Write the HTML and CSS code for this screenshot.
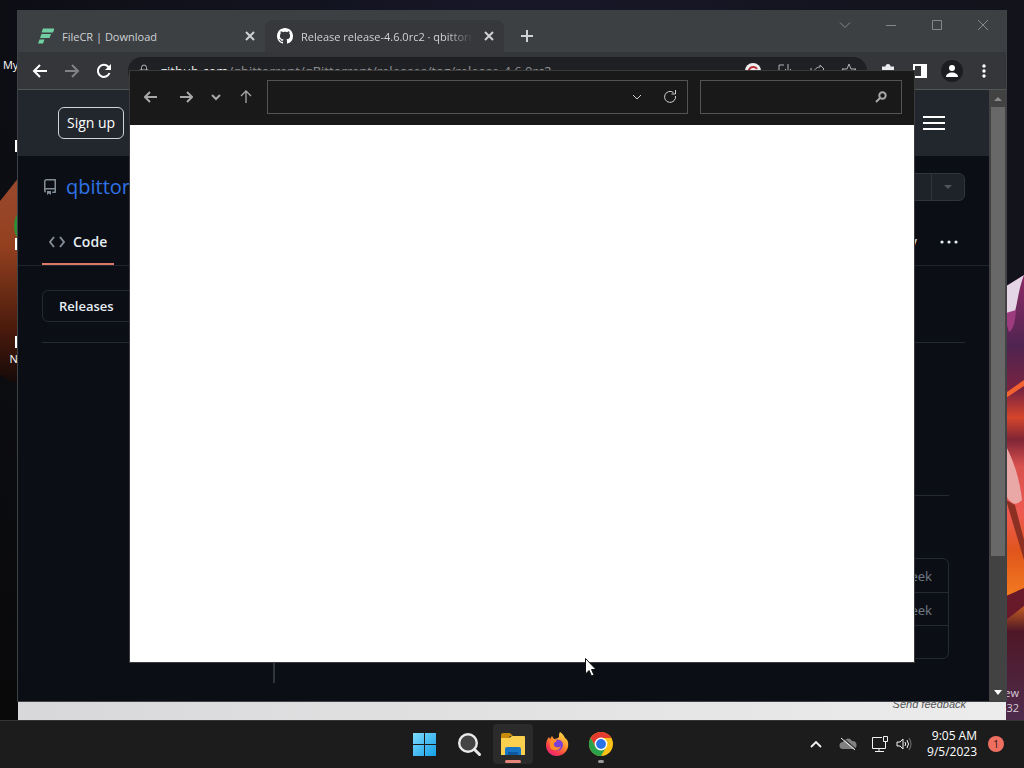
FILE: index.html
```html
<!DOCTYPE html>
<html lang="en">
<head>
    <meta charset="UTF-8">
    <meta name="viewport" content="width=device-width, initial-scale=1.0">
    <title>Desktop</title>
    <link rel="stylesheet" href="styles.css">
</head>
<body>
    <main class="desktop">
        <svg class="wallpaper" viewBox="0 0 1024 720" preserveAspectRatio="none" aria-hidden="true">
            <defs>
                <linearGradient id="sky" x1="0" y1="0" x2="1" y2="0">
                    <stop offset="0" stop-color="#0d0e14"/>
                    <stop offset="0.5" stop-color="#171728"/>
                    <stop offset="1" stop-color="#13131c"/>
                </linearGradient>
                <linearGradient id="shade" x1="0" y1="0" x2="0" y2="1">
                    <stop offset="0" stop-color="#0a0b0d" stop-opacity="0"/>
                    <stop offset="1" stop-color="#09090a"/>
                </linearGradient>
                <linearGradient id="ember" x1="0" y1="0" x2="0" y2="1">
                    <stop offset="0" stop-color="#9a4a30"/>
                    <stop offset="0.35" stop-color="#93401f"/>
                    <stop offset="0.75" stop-color="#4a1a0c"/>
                    <stop offset="1" stop-color="#160a08"/>
                </linearGradient>
                <linearGradient id="petal" x1="0" y1="0" x2="0" y2="1">
                    <stop offset="0" stop-color="#8c2c66"/>
                    <stop offset="0.16" stop-color="#4f2450"/>
                    <stop offset="0.26" stop-color="#7a2340"/>
                    <stop offset="0.32" stop-color="#d5452c"/>
                    <stop offset="0.37" stop-color="#7f2535"/>
                    <stop offset="0.43" stop-color="#d9504e"/>
                    <stop offset="0.54" stop-color="#ee5a50"/>
                    <stop offset="0.62" stop-color="#e0551c"/>
                    <stop offset="0.72" stop-color="#f27a20"/>
                    <stop offset="0.8" stop-color="#4f1726"/>
                    <stop offset="1" stop-color="#4d2b4c"/>
                </linearGradient>
            </defs>
            <rect width="1024" height="720" fill="url(#sky)"/>
            <rect y="60" width="400" height="660" fill="url(#shade)"/>
            <path d="M24 172C14 182 8 192 0 201V374C8 382 16 384 24 380Z" fill="url(#ember)"/>
            <path d="M1000 290L1024 275V720H1000Z" fill="url(#petal)"/>
            <path d="M1000 290L1024 275C1018 290 1017 308 1014 314L1000 318Z" fill="#e4d5e6"/>
            <path d="M1006 313L1016 310C1015 323 1013 330 1009 332L1006 322Z" fill="#9c3c7e"/>
            <path d="M1000 397L1024 380V386L1000 402Z" fill="#f2622e"/>
            <path d="M1006 446C1014 462 1020 480 1022 500C1016 506 1012 505 1006 496Z" fill="#e9a7a5"/>
            <path d="M1006 500L1024 560V540L1015 505Z" fill="#8c3023"/>
            <path d="M1006 596L1024 588V606L1006 620Z" fill="#681a2b"/>
        </svg>

        <ul class="shortcuts">
            <li>
                <svg width="48" height="48" viewBox="0 0 48 48"></svg>
                <span>My Computer</span>
            </li>
            <li>
                <svg width="48" height="48" viewBox="0 0 48 48"><circle cx="24" cy="22" r="21" fill="#d33a32"/><path d="M1 34h12v12H1z" fill="#fff"/></svg>
                <span>Opera</span>
            </li>
            <li>
                <svg width="48" height="48" viewBox="0 0 48 48"><circle cx="24" cy="22" r="24" fill="#2f8f35"/><path d="M1 34h12v12H1z" fill="#fff"/></svg>
                <span>IDM</span>
            </li>
            <li>
                <svg width="48" height="48" viewBox="0 0 48 48"><circle cx="24" cy="22" r="18" fill="#63c14b"/><path d="M1 34h12v12H1z" fill="#fff"/></svg>
                <span>Notepad++</span>
            </li>
        </ul>

        <p class="watermark">Preview<br>22632</p>

        <section class="back-window">
            <a href="#" class="feedback">Send feedback</a>
        </section>

        <section class="browser" aria-label="Browser">
            <div class="tab-strip">
                <div class="tab">
                    <svg width="16" height="16" viewBox="0 0 16 16" fill="#70d0a4"><path d="M5 0.500h11.500l-1.500 4H3.500z"/><path d="M3.500 6h9.500l-1.500 4H2z"/><path d="M1.500 11.500h5l-1.500 4H0z"/></svg>
                    <span class="tab-title">FileCR | Download</span>
                    <button class="tab-close" aria-label="Close tab"><svg width="10" height="10" viewBox="0 0 10 10"><path d="M1 1l8 8M9 1L1 9"/></svg></button>
                </div>
                <div class="tab active">
                    <svg width="16" height="16" viewBox="0 0 16 16" fill="#fff"><path d="M8 0C3.580 0 0 3.580 0 8c0 3.540 2.290 6.530 5.470 7.590.4.070.55-.17.55-.38 0-.19-.01-.82-.01-1.490-2.010.37-2.530-.49-2.690-.94-.09-.23-.48-.94-.82-1.130-.28-.15-.68-.52-.01-.53.63-.01 1.080.58 1.230.82.72 1.210 1.870.87 2.330.66.07-.52.28-.87.51-1.070-1.780-.2-3.640-.89-3.640-3.950 0-.87.31-1.590.82-2.150-.08-.2-.36-1.020.08-2.120 0 0 .67-.21 2.200.82.64-.18 1.320-.27 2-.27s1.360.09 2 .27c1.530-1.040 2.200-.82 2.200-.82.44 1.100.16 1.920.08 2.120.51.56.82 1.270.82 2.150 0 3.070-1.870 3.750-3.650 3.950.29.25.54.73.54 1.480 0 1.070-.01 1.930-.01 2.200 0 .21.15.46.55.38A8.010 8.010 0 0 0 16 8c0-4.420-3.580-8-8-8z"/></svg>
                    <span class="tab-title faded">Release release-4.6.0rc2 · qbittorr</span>
                    <button class="tab-close" aria-label="Close tab"><svg width="10" height="10" viewBox="0 0 10 10"><path d="M1 1l8 8M9 1L1 9"/></svg></button>
                </div>
                <button class="new-tab" aria-label="New tab"><svg width="12" height="12" viewBox="0 0 12 12"><path d="M6 0v12M0 6h12"/></svg></button>
                <div class="window-controls">
                    <button aria-label="Search tabs"><svg width="12" height="12" viewBox="0 0 12 12"><path d="M1 3.500l5 5 5-5"/></svg></button>
                    <button aria-label="Minimize"><svg width="12" height="12" viewBox="0 0 12 12"><path d="M1 6.500h10"/></svg></button>
                    <button aria-label="Maximize"><svg width="12" height="12" viewBox="0 0 12 12"><path d="M1.500 1.500h9v9h-9z"/></svg></button>
                    <button aria-label="Close"><svg width="12" height="12" viewBox="0 0 12 12"><path d="M1 1l10 10M11 1L1 11"/></svg></button>
                </div>
            </div>

            <div class="toolbar">
                <button aria-label="Back"><svg width="16" height="16" viewBox="0 0 16 16"><path d="M15 8H2M8 2L2 8l6 6"/></svg></button>
                <button class="dim" aria-label="Forward"><svg width="16" height="16" viewBox="0 0 16 16"><path d="M1 8h13M8 2l6 6-6 6"/></svg></button>
                <button aria-label="Reload"><svg width="16" height="16" viewBox="0 0 16 16"><path d="M13.500 10A6 6 0 1 1 12.300 3.800L14 5.500"/><path d="M15 1v6H9z" fill="#fff" stroke="none"/></svg></button>
                <div class="omnibox">
                    <svg width="12" height="14" viewBox="0 0 12 14"><path d="M1.500 6h9v7h-9zM3.500 6V3.500a2.500 2.500 0 0 1 5 0V6"/></svg>
                    <a href="#" class="url"><b>github.com</b>/qbittorrent/qBittorrent/releases/tag/release-4.6.0rc2</a>
                    <div class="omni-actions">
                        <button aria-label="Google"><svg width="16" height="16" viewBox="0 0 16 16"><circle cx="8" cy="8" r="8" fill="#eee" stroke="none"/><path d="M12 6A4.500 4.500 0 1 0 12 11H8" stroke="#b8323c" stroke-width="2"/></svg></button>
                        <button aria-label="Install"><svg width="16" height="16" viewBox="0 0 16 16"><path d="M7 2H2v10h12V9M11 1v8M8 6l3 3 3-3"/></svg></button>
                        <button aria-label="Share"><svg width="16" height="16" viewBox="0 0 16 16"><path d="M2 5v9h11v-3M5 10c0-4 3-6 6-6V2l4 4-4 4V7"/></svg></button>
                        <button aria-label="Bookmark"><svg width="16" height="16" viewBox="0 0 16 16"><path d="M8 1l2 5h5l-4 3 2 6-5-4-5 4 2-6-4-3h5z"/></svg></button>
                    </div>
                </div>
                <button aria-label="Extensions"><svg width="16" height="16" viewBox="0 0 16 16"><path d="M2 3.500h3.500a2.500 2.500 0 0 1 5 0H14V8a2 2 0 0 1 0 4v3H2z" fill="#e8eaed" stroke="none"/></svg></button>
                <button aria-label="Side panel"><svg width="16" height="16" viewBox="0 0 16 16"><path d="M2 2h12v12H2z"/><path d="M9 2h5v12H9z" fill="#fff" stroke="none"/></svg></button>
                <button aria-label="Profile"><svg width="24" height="24" viewBox="0 0 24 24"><circle cx="12" cy="12" r="11" fill="#1c1d20" stroke="none"/><circle cx="12" cy="9" r="3" fill="#fff" stroke="none"/><path d="M6 18c0-6 12-6 12 0z" fill="#fff" stroke="none"/></svg></button>
                <button aria-label="Menu"><svg width="4" height="14" viewBox="0 0 4 14" class="solid"><circle cx="2" cy="2" r="1.700"/><circle cx="2" cy="7" r="1.700"/><circle cx="2" cy="12" r="1.700"/></svg></button>
            </div>

            <div class="viewport">
                <div class="page">
                    <header class="site-header">
                        <a href="#" class="sign-up">Sign up</a>
                        <button class="hamburger" aria-label="Menu"><span></span><span></span><span></span></button>
                    </header>

                    <div class="repo-head">
                        <svg width="16" height="16" viewBox="0 0 16 16" fill="#848d97"><path d="M2 2.500A2.500 2.500 0 0 1 4.500 0h8.750a.75.75 0 0 1 .75.75v12.500a.75.75 0 0 1-.75.75h-2.500a.75.75 0 0 1 0-1.500h1.750v-2h-8a1 1 0 0 0-.714 1.700.75.75 0 1 1-1.072 1.050A2.495 2.495 0 0 1 2 11.500Zm10.500-1h-8a1 1 0 0 0-1 1v6.708A2.486 2.486 0 0 1 4.500 9h8ZM5 12.250a.25.25 0 0 1 .25-.25h3.500a.25.25 0 0 1 .25.25v3.250a.25.25 0 0 1-.4.200l-1.450-1.087a.249.249 0 0 0-.3 0L5.400 15.700a.25.25 0 0 1-.4-.2Z"/></svg>
                        <a href="#" class="owner">qbittorrent</a>
                        <div class="star-group">
                            <button>Star</button>
                            <button class="caret" aria-label="Lists"><svg width="8" height="4" viewBox="0 0 8 4"><path d="M0 0h8L4 4z"/></svg></button>
                        </div>
                    </div>

                    <nav class="repo-nav">
                        <a href="#" class="selected">
                            <svg width="16" height="16" viewBox="0 0 16 16"><path d="M5 3L1 8l4 5M11 3l4 5-4 5"/></svg>
                            Code
                        </a>
                        <a href="#" class="security">Security</a>
                        <button class="more" aria-label="More"><svg width="18" height="4" viewBox="0 0 18 4"><circle cx="2" cy="2" r="1.600"/><circle cx="9" cy="2" r="1.600"/><circle cx="16" cy="2" r="1.600"/></svg></button>
                    </nav>

                    <div class="content">
                        <div class="subnav">
                            <a href="#">Releases</a>
                            <a href="#">Tags</a>
                        </div>
                        <article class="release">
                            <div class="notes"></div>
                            <ul class="assets">
                                <li>last week</li>
                                <li>last week</li>
                                <li></li>
                            </ul>
                        </article>
                    </div>
                </div>
                <div class="scrollbar">
                    <svg width="8" height="4" viewBox="0 0 8 4" fill="#8b8b8b"><path d="M0 4h8L4 0z"/></svg>
                    <div class="thumb"></div>
                    <svg width="8" height="5" viewBox="0 0 8 5" fill="#fff"><path d="M0 0h8L4 5z"/></svg>
                </div>
            </div>
        </section>

        <section class="explorer" aria-label="File Explorer">
            <div class="explorer-bar">
                <button class="wide" aria-label="Back"><svg width="14" height="14" viewBox="0 0 14 14"><path d="M13 7H1M6 2L1 7l5 5"/></svg></button>
                <button class="wide" aria-label="Forward"><svg width="14" height="14" viewBox="0 0 14 14"><path d="M1 7h12M8 2l5 5-5 5"/></svg></button>
                <button class="narrow" aria-label="Recent"><svg width="10" height="10" viewBox="0 0 10 10"><path d="M1 3l4 4 4-4"/></svg></button>
                <button aria-label="Up"><svg width="14" height="14" viewBox="0 0 14 14"><path d="M7 13V1M2 6l5-5 5 5" stroke-width="1.300"/></svg></button>
                <div class="field address">
                    <input type="text" aria-label="Address">
                    <button aria-label="Previous locations"><svg class="thin" width="10" height="10" viewBox="0 0 10 10"><path d="M1 3l4 4 4-4"/></svg></button>
                    <button aria-label="Refresh"><svg class="thin" width="14" height="14" viewBox="0 0 14 14"><path d="M12.500 6A5.500 5.500 0 1 1 10.500 2.600M8.500 4h4V0"/></svg></button>
                </div>
                <div class="field search">
                    <input type="search" aria-label="Search">
                    <button aria-label="Search"><svg width="12" height="12" viewBox="0 0 12 12"><circle cx="7.500" cy="4.500" r="3.200"/><path d="M5 7l-4 4"/></svg></button>
                </div>
            </div>
        </section>

        <svg class="cursor" width="12" height="19" viewBox="0 0 12 19" aria-hidden="true"><path d="M0.500 0.500V16L4 12.500l2.500 5.500 2.500-1-2.500-5.500H11z" fill="#fff" stroke="#111"/></svg>
    </main>

    <footer class="taskbar">
        <div class="apps">
            <button aria-label="Start">
                <svg width="24" height="24" viewBox="0 0 24 24">
                    <defs><linearGradient id="win" x1="0" y1="0" x2="1" y2="1"><stop offset="0" stop-color="#7fdcfb"/><stop offset="1" stop-color="#149fe8"/></linearGradient></defs>
                    <path d="M0 1h11v11H0zM12 1h11v11H12zM0 13h11v11H0zM12 13h11v11H12z" fill="url(#win)"/>
                </svg>
            </button>
            <button aria-label="Search">
                <svg width="24" height="24" viewBox="0 0 24 24" fill="none" stroke="#e9e9e9"><circle cx="11" cy="11" r="8.800" fill="#444" stroke-width="2.400"/><path d="M17.500 17.500l5 5" stroke-width="3" stroke-linecap="round"/></svg>
            </button>
            <button class="active" aria-label="File Explorer">
                <svg width="26" height="24" viewBox="0 0 26 24"><path d="M1 3q0-2 2-2h7l3 3h-3L8 7H1z" fill="#c98a0c"/><path d="M1 6h8l3-2h12q1 0 1 1v18H1z" fill="#fbd04f"/><path d="M5 23v-6q0-2 2-2h12q2 0 2 2v6z" fill="#1875c4"/><path d="M8 20h10v3H8z" fill="#0d5aa3"/></svg>
            </button>
            <button aria-label="Firefox">
                <svg width="24" height="24" viewBox="0 0 24 24">
                    <defs><linearGradient id="fox" x1="0.800" y1="0" x2="0.200" y2="1"><stop offset="0" stop-color="#ffe14a"/><stop offset="0.450" stop-color="#ff8a2b"/><stop offset="0.750" stop-color="#fb3d4c"/><stop offset="1" stop-color="#e5217e"/></linearGradient></defs>
                    <path d="M15 0c3 2 4 4 5 6 2 1 4 4 3 9-1 5-6 9-11 9C5 24 1 19 1 13c0-3 1-6 3-8l1 2c1-1 1-2 2-3l2 3c2 0 4-1 5-2 0-2 0-4 1-5z" fill="url(#fox)"/>
                    <circle cx="12.500" cy="13" r="5.500" fill="#7a3fd6"/>
                    <path d="M5 9c2-2 5-2 7 0l-3 2c-1 4 4 6 7 3-1 5-9 6-11 1z" fill="#ff8f24"/>
                </svg>
            </button>
            <button class="running" aria-label="Chrome">
                <svg width="24" height="24" viewBox="0 0 24 24">
                    <circle cx="12" cy="12" r="12" fill="#fbc116"/>
                    <path d="M12 6h10.400A12 12 0 0 0 1.600 6L6.800 15z" fill="#e33b2e"/>
                    <path d="M1.600 6A12 12 0 0 0 12 24l5.200-9L12 12 6.800 15z" fill="#2aa14b"/>
                    <circle cx="12" cy="12" r="6.400" fill="#fff"/><circle cx="12" cy="12" r="4.900" fill="#2a72e8"/>
                </svg>
            </button>
        </div>
        <div class="tray">
            <button aria-label="Hidden icons"><svg width="12" height="8" viewBox="0 0 12 8"><path d="M1 7l5-5 5 5" stroke-width="1.800"/></svg></button>
            <button aria-label="OneDrive"><svg width="18" height="16" viewBox="0 0 18 16"><path d="M4 13a3.500 3.500 0 0 1 0-7 5 5 0 0 1 9-1 4 4 0 0 1 1 8z" fill="#808080" stroke="none"/><path d="M3 1l14 12" stroke="#1c1c1c"/><path d="M2 2l14 12"/></svg></button>
            <div class="quick">
                <button aria-label="Network"><svg width="18" height="18" viewBox="0 0 18 18"><path d="M11 2.500H1.500v11h13V9M8 14v2M4 16.500h9M12.500 1.500h4v5h-4zM14.500 7v6"/></svg></button>
                <button aria-label="Volume"><svg width="16" height="16" viewBox="0 0 16 16"><path d="M1 6v4h3l3 3V3L4 6zM9 6q1.500 2 0 4M11 4q3 4 0 8"/><path d="M13 2q4 6 0 12" stroke="#777"/></svg></button>
            </div>
            <time class="clock" datetime="2023-09-05T09:05">9:05 AM<br>9/5/2023</time>
            <button class="badge" aria-label="1 notification">1</button>
        </div>
    </footer>
</body>
</html>
```
FILE: styles.css
```css
* {
    box-sizing: border-box;
}

body {
    margin: 0;
    height: 100vh;
    display: flex;
    flex-direction: column;
    overflow: hidden;
    font-family: "Open Sans", "Noto Sans", sans-serif;
    font-size: 11px;
    color: #fff;
    background: #1c1c1c;
}

button {
    display: flex;
    align-items: center;
    justify-content: center;
    padding: 0;
    border: none;
    background: none;
    color: inherit;
    font: inherit;
}

a {
    color: inherit;
    text-decoration: none;
}

svg {
    flex: none;
}

/* Desktop */
.desktop {
    flex: 1;
    position: relative;
    overflow: hidden;
}

.wallpaper {
    position: absolute;
    width: 100%;
    height: 100%;
}

.shortcuts {
    position: absolute;
    left: 0;
    top: 0;
    margin: 0;
    padding: 8px 0;
    list-style: none;
    display: flex;
    flex-direction: column;
    gap: 32px;
    width: 76px;
}

.shortcuts li {
    display: flex;
    flex-direction: column;
    align-items: center;
    line-height: 18px;
    white-space: nowrap;
}

.watermark {
    position: absolute;
    right: 5px;
    bottom: 5px;
    margin: 0;
    text-align: right;
    line-height: 15px;
    color: #d8ccd8;
}

.back-window {
    position: absolute;
    left: 18px;
    right: 18px;
    bottom: 0;
    height: 60px;
    display: flex;
    align-items: flex-end;
    justify-content: flex-end;
    padding: 8px 40px;
    background: linear-gradient(90deg, #d8d8da, #ececec);
}

.feedback {
    font-family: "Liberation Sans", sans-serif;
    font-size: 11px;
    font-style: italic;
    line-height: 16px;
    color: #555;
}

/* Browser */
.browser {
    position: absolute;
    left: 17px;
    right: 17px;
    top: 10px;
    bottom: 18px;
    display: flex;
    flex-direction: column;
    border: 1px solid #3f4346;
    border-top: none;
    background: #0b0f15;
}

.tab-strip {
    display: flex;
    align-items: flex-end;
    height: 42px;
    padding-left: 8px;
    background: #3c4043;
}

.tab {
    flex: 0 1 239px;
    min-width: 0;
    display: flex;
    align-items: center;
    gap: 8px;
    height: 32px;
    padding: 0 7px 0 12px;
    border-radius: 8px 8px 0 0;
    color: #cfd1d4;
}

.tab.active {
    background: #37383c;
}

.tab-title {
    flex: 1;
    overflow: hidden;
    white-space: nowrap;
}

.faded {
    -webkit-mask-image: linear-gradient(90deg, #000 85%, transparent);
    mask-image: linear-gradient(90deg, #000 85%, transparent);
}

.tab-close {
    width: 16px;
    height: 16px;
}

.tab-close svg,
.new-tab svg {
    fill: none;
    stroke: #cfd1d4;
    stroke-width: 2;
}

.new-tab {
    width: 28px;
    height: 32px;
    margin-left: 9px;
}

.window-controls {
    display: flex;
    align-self: flex-start;
    margin-left: auto;
}

.window-controls button {
    width: 46px;
    height: 30px;
}

.window-controls svg {
    fill: none;
    stroke: #85888b;
}

.toolbar {
    display: flex;
    align-items: center;
    height: 38px;
    padding: 0 6px;
    background: #35363a;
    border-bottom: 1px solid #505756;
}

.toolbar button {
    width: 32px;
    height: 32px;
}

.toolbar svg {
    fill: none;
    stroke: #fff;
    stroke-width: 2;
}

.toolbar .dim svg {
    stroke: #808286;
}

.toolbar .solid {
    fill: #fff;
    stroke: none;
}

.omnibox {
    flex: 1;
    min-width: 0;
    display: flex;
    align-items: center;
    gap: 10px;
    height: 28px;
    margin: 0 5px 0 8px;
    padding: 0 2px 0 10px;
    border-radius: 14px;
    background: #1f2023;
    color: #8f9195;
}

.omnibox svg {
    stroke: #b0b2b5;
    stroke-width: 1;
}

.url {
    flex: 1;
    overflow: hidden;
    white-space: nowrap;
    font-size: 13px;
}

.url b {
    font-weight: normal;
    color: #e8eaed;
}

.omni-actions {
    display: flex;
}

.viewport {
    flex: 1;
    min-height: 0;
    display: flex;
}

.page {
    flex: 1;
    min-width: 0;
    overflow: hidden;
    font-family: "Noto Sans", sans-serif;
    font-size: 14px;
    color: #e6edf3;
}

.site-header {
    display: flex;
    align-items: center;
    justify-content: space-between;
    height: 66px;
    padding: 0 44px 0 40px;
    background: #22272e;
}

.sign-up {
    padding: 5px 8px;
    border: 1px solid #d0d4d8;
    border-radius: 6px;
    font-family: "Open Sans", sans-serif;
    line-height: 20px;
    color: #fff;
}

.hamburger {
    flex-direction: column;
    gap: 4px;
    width: 22px;
}

.hamburger span {
    width: 100%;
    height: 2px;
    background: #fff;
}

.repo-head {
    display: flex;
    align-items: center;
    gap: 8px;
    padding: 16px 24px;
    line-height: 30px;
}

.owner {
    font-family: "Open Sans", sans-serif;
    font-size: 20px;
    color: #2f72e6;
}

.star-group {
    display: flex;
    height: 28px;
    margin-left: auto;
    border: 1px solid #30353c;
    border-radius: 6px;
    background: #1e2229;
    color: #3d444d;
}

.star-group button {
    padding: 0 16px;
}

.star-group .caret {
    padding: 0 12px;
    border-left: 1px solid #30353c;
}

.caret svg {
    fill: #50565e;
}

.repo-nav {
    display: flex;
    align-items: stretch;
    height: 48px;
    padding: 0 24px;
    border-bottom: 1px solid #21262d;
}

.repo-nav a {
    display: flex;
    align-items: center;
    gap: 8px;
}

.repo-nav .selected {
    padding: 0 7px;
    border-top: 2px solid transparent;
    border-bottom: 2px solid #e0786a;
    font-family: "Open Sans", sans-serif;
    font-weight: 600;
}

.selected svg {
    fill: none;
    stroke: #848d97;
    stroke-width: 2;
}

.repo-nav .security {
    margin-left: auto;
}

.more {
    width: 64px;
    margin-right: -16px;
}

.more svg {
    fill: #e6edf3;
}

.content {
    padding: 24px 24px 0;
}

.subnav {
    display: flex;
    padding-bottom: 20px;
    border-bottom: 1px solid #242a31;
    font-family: "Open Sans", sans-serif;
    font-size: 13px;
    font-weight: 600;
}

.subnav a {
    padding: 5px 16px;
    border: 1px solid #242a31;
    line-height: 20px;
}

.subnav a:first-child {
    border-radius: 6px 0 0 6px;
}

.release {
    margin: 24px 0 0 231px;
    padding: 0 16px 24px;
    border-left: 2px solid #30353c;
}

.notes {
    height: 129px;
    border-bottom: 1px solid #242a31;
}

.assets {
    margin: 62px 0 0;
    padding: 0;
    list-style: none;
    border: 1px solid #242a31;
    border-radius: 6px;
    font-size: 13px;
    color: #6e7681;
}

.assets li {
    height: 33px;
    padding: 0 16px;
    line-height: 34px;
    text-align: right;
}

.assets li + li {
    border-top: 1px solid #242a31;
}

.scrollbar {
    display: flex;
    flex-direction: column;
    align-items: center;
    width: 17px;
    padding: 7px 0 6px;
    background: #424242;
}

.thumb {
    width: 14px;
    height: 75%;
    margin: 6px 0 auto;
    background: #686868;
}

/* File Explorer */
.explorer {
    position: absolute;
    left: 129px;
    right: 109px;
    top: 70px;
    bottom: 57px;
    border: 1px solid #3a3a3a;
    background: #fff;
}

.explorer-bar {
    display: flex;
    align-items: center;
    height: 54px;
    padding: 0 12px 2px 3px;
    background: #191919;
}

.explorer-bar button {
    width: 33px;
    height: 32px;
}

.explorer-bar .wide {
    width: 35px;
}

.explorer-bar .narrow {
    width: 26px;
}

.explorer-bar svg {
    fill: none;
    stroke: #a8a8a8;
    stroke-width: 2;
}

.explorer-bar .thin {
    stroke-width: 1;
    stroke: #d0d0d0;
}

.field {
    display: flex;
    height: 34px;
    border: 1px solid #535353;
}

.field input {
    flex: 1;
    min-width: 0;
    border: none;
    outline: none;
    background: none;
    color: #fff;
}

.address {
    flex: 1;
    margin: 0 12px 0 5px;
    padding-right: 1px;
}

.search {
    width: 202px;
    padding-right: 4px;
}

.cursor {
    position: absolute;
    left: 585px;
    top: 658px;
}

/* Taskbar */
.taskbar {
    display: grid;
    grid-template-columns: 1fr auto 1fr;
    align-items: center;
    height: 48px;
    padding-bottom: 2px;
    background: #1c1c1c;
    border-top: 1px solid #343434;
}

.apps {
    grid-column: 2;
    display: flex;
    gap: 4px;
    padding-left: 2px;
}

.apps button {
    position: relative;
    width: 40px;
    height: 40px;
    border-radius: 4px;
}

.apps .active {
    background: #2b2b2b;
}

.apps .active::after,
.apps .running::after {
    content: "";
    position: absolute;
    bottom: 1px;
    width: 16px;
    height: 3px;
    border-radius: 2px;
    background: #e8857a;
}

.apps .running::after {
    width: 6px;
    background: #9a9a9a;
}

.tray {
    justify-self: end;
    display: flex;
    align-items: center;
    padding-right: 20px;
}

.tray button {
    width: 32px;
    height: 32px;
}

.quick {
    display: flex;
    padding-left: 4px;
}

.tray .quick button {
    width: 24px;
}

.tray svg {
    fill: none;
    stroke: #f2f2f2;
}

.clock {
    margin: 0 11px;
    text-align: right;
    font-size: 12px;
    line-height: 16px;
}

.tray .badge {
    width: 16px;
    height: 16px;
    border-radius: 50%;
    background: #ee6f60;
    color: #2a1210;
    font-size: 10px;
}
```
